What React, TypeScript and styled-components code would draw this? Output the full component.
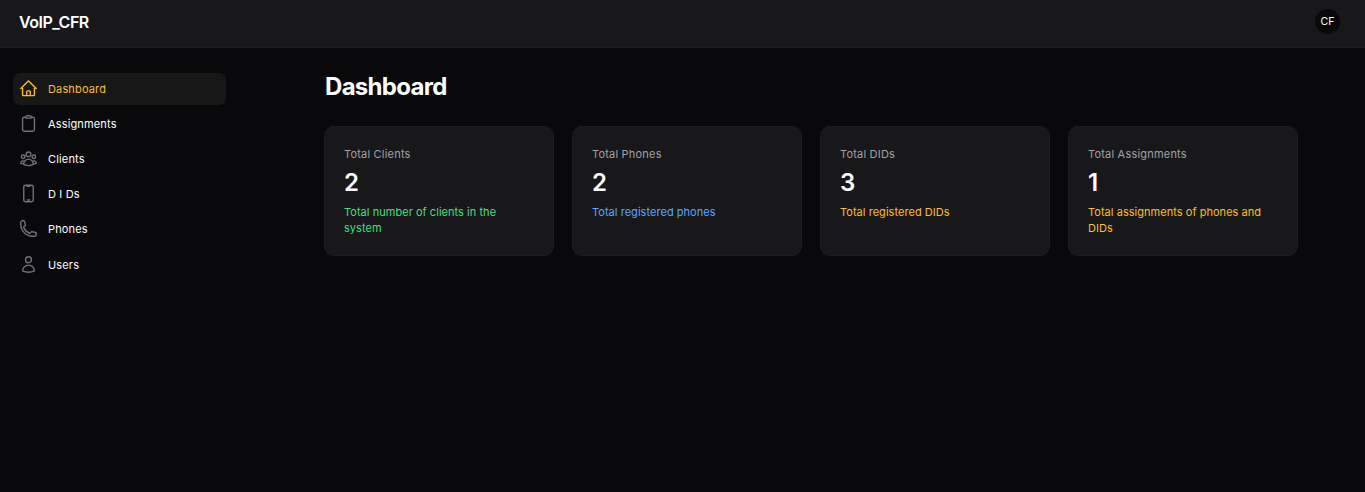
import React from "react";
import styled, { createGlobalStyle } from "styled-components";
import { HiOutlineHome, HiOutlineClipboard, HiOutlineUserGroup, HiOutlineDevicePhoneMobile, HiOutlinePhone, HiOutlineUser } from "react-icons/hi2";

const Global = createGlobalStyle`
  *{box-sizing:border-box}
  body{margin:0;background:#09090b;color:#fff;font-family:Inter,"Liberation Sans",sans-serif;}
`;
const Page = styled.div`min-height:492px;`;
const Header = styled.header`
  height:48px;background:#18181b;border-bottom:1px solid #1e1e20;
  display:flex;align-items:center;justify-content:space-between;padding:0 25px 4px 19px;
`;
const Brand = styled.div`font-size:16px;line-height:24px;font-weight:600;letter-spacing:-0.5px;`;
const Avatar = styled.div`
  width:25px;height:25px;border-radius:50%;background:#09090b;font-size:10.5px;
  display:flex;align-items:center;justify-content:center;
`;
const Body = styled.div`display:flex;`;
const Sidebar = styled.nav`
  width:239px;padding:25px 13px;display:flex;flex-direction:column;gap:3.12px;flex:none;
`;
const NavItem = styled.a<{ $active?: boolean }>`
  height:32px;border-radius:7px;padding:0 6px;display:flex;align-items:center;gap:10px;
  font-size:11px;font-weight:400;letter-spacing:.15px;
  color:${(p) => (p.$active ? "#fbbf24" : "#fff")};
  background:${(p) => (p.$active ? "#171717" : "transparent")};
  svg{width:19px;height:19px;margin-bottom:1px;flex:none;stroke-width:1.75;color:${(p) => (p.$active ? "#fbbf24" : "#71717a")};}
`;
const Main = styled.main`flex:1;padding:25px 67px 0 85px;`;
const Title = styled.h1`margin:0 0 25px 1px;font-size:24px;line-height:28px;font-weight:700;letter-spacing:-.7px;`;
const Stats = styled.section`display:grid;grid-template-columns:repeat(4,1fr);gap:18px;`;
const Card = styled.article`
  height:130px;background:#18181b;border:1px solid #1e1e20;border-radius:10px;padding:19px;
`;
const Label = styled.div`font-size:11px;line-height:17px;font-weight:400;color:#a1a1aa;letter-spacing:.2px;`;
const Value = styled.div`font-size:24px;line-height:32px;font-weight:600;margin:4px 0 5px;`;
const Note = styled.div<{ $color: string }>`font-size:11px;line-height:16px;font-weight:400;letter-spacing:.04px;color:${(p) => p.$color};`;

const nav = [
  { label: "Dashboard", Icon: HiOutlineHome },
  { label: "Assignments", Icon: HiOutlineClipboard },
  { label: "Clients", Icon: HiOutlineUserGroup },
  { label: "D I Ds", Icon: HiOutlineDevicePhoneMobile },
  { label: "Phones", Icon: HiOutlinePhone },
  { label: "Users", Icon: HiOutlineUser },
];
const stats = [
  { label: "Total Clients", value: 2, note: "Total number of clients in the system", color: "#4ade80" },
  { label: "Total Phones", value: 2, note: "Total registered phones", color: "#60a5fa" },
  { label: "Total DIDs", value: 3, note: "Total registered DIDs", color: "#fbbf24" },
  { label: "Total Assignments", value: 1, note: "Total assignments of phones and DIDs", color: "#fbbf24" },
];

export default function App() {
  return (
    <Page>
      <Global />
      <Header><Brand>VoIP_CFR</Brand><Avatar>CF</Avatar></Header>
      <Body>
        <Sidebar>
          {nav.map(({ label, Icon }, i) => (
            <NavItem key={label} $active={i === 0}><Icon />{label}</NavItem>
          ))}
        </Sidebar>
        <Main>
          <Title>Dashboard</Title>
          <Stats>
            {stats.map((s) => (
              <Card key={s.label}><Label>{s.label}</Label><Value>{s.value}</Value><Note $color={s.color}>{s.note}</Note></Card>
            ))}
          </Stats>
        </Main>
      </Body>
    </Page>
  );
}
